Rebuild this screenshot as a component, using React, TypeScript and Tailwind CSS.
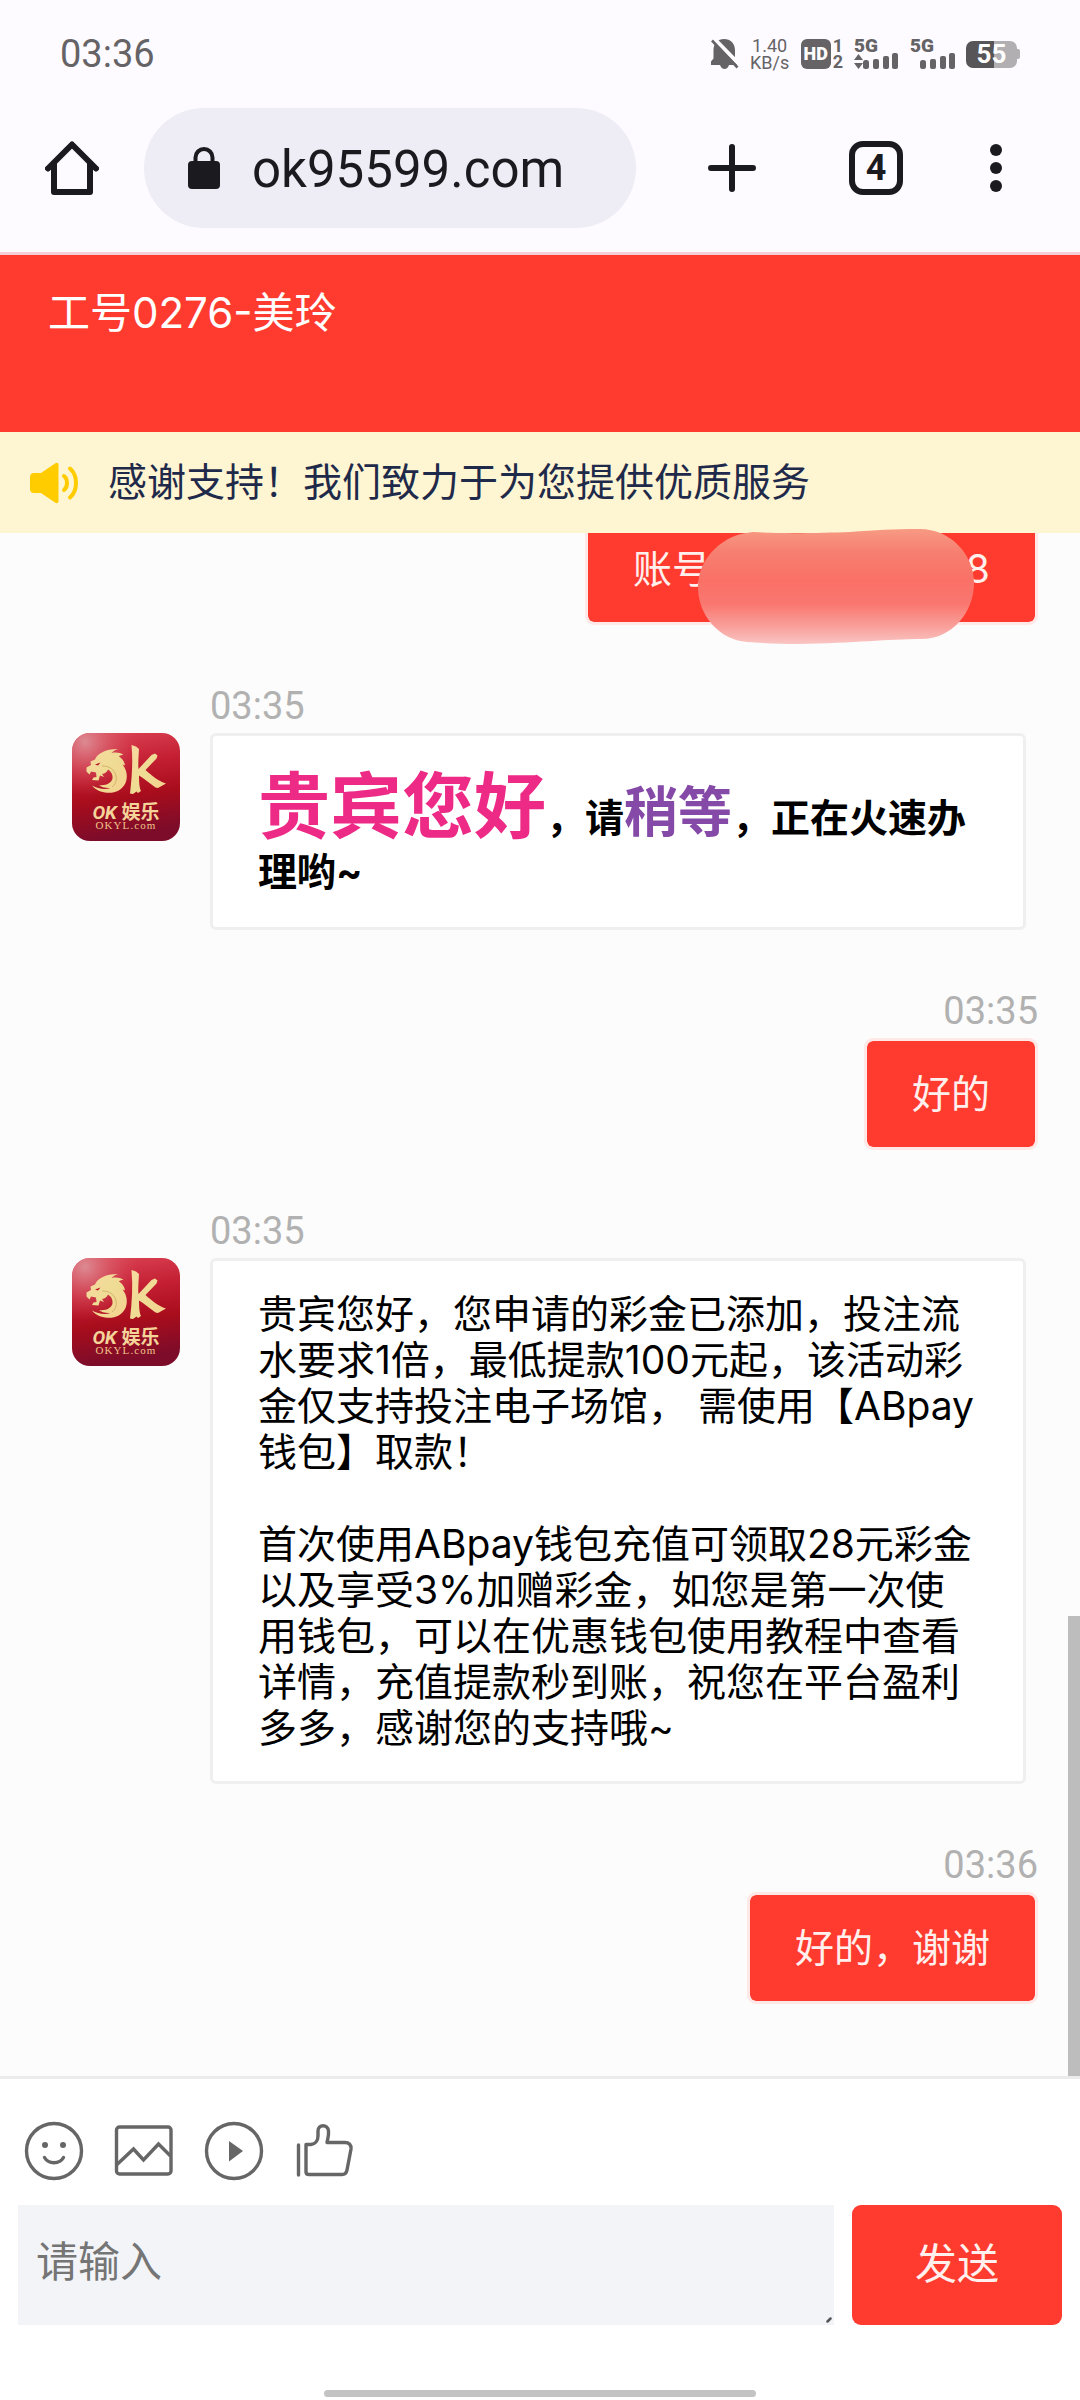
import type { ReactNode } from "react";

// ============================
// Status bar
// ============================
function SignalBars() {
  return (
    <svg width="36" height="16" viewBox="0 0 36 16" fill="currentColor">
      <rect x="0" y="7" width="6" height="9" rx="2.5" />
      <rect x="10" y="6" width="6" height="10" rx="2" />
      <rect x="20" y="3" width="6" height="13" rx="2" />
      <rect x="29" y="0" width="6" height="16" rx="2" />
    </svg>
  );
}

function StatusBar() {
  return (
    <div className="flex h-[108px] items-center justify-between px-[60px] text-[#656366]">
      <span className="text-[38px] leading-[46px]">03:36</span>
      <div className="flex items-center">
        {/* muted bell */}
        <svg width="28" height="32" viewBox="0 0 28 32">
          <path
            d="M13 1C19.500 1 24 5.500 24 12v9l3 4v2H18c-.8 2.500-2.500 4-4.500 4S10 29.500 9 27H0v-3.500l2.500-3V12C2.500 5.500 7 1 13 1z"
            fill="currentColor"
          />
          <path d="M2 -0.500L29 27" stroke="#fdfbff" strokeWidth="4" />
          <path d="M0 0L0 10L6 4z" fill="#fdfbff" />
          <path d="M1 2.500L26.500 29.500" stroke="currentColor" strokeWidth="2.600" />
        </svg>
        <div className="ml-3 flex w-[38px] flex-col items-center text-[18px] leading-[17px]">
          <span>1.40</span>
          <span>KB/s</span>
        </div>
        <div className="ml-3 flex h-[30px] w-[30px] items-center justify-center rounded-[6px] bg-[#656366] text-[18px] leading-[18px] font-black text-white">
          HD
        </div>
        <div className="ml-[2px] flex flex-col text-[18px] leading-[16px] font-bold">
          <span>1</span>
          <span>2</span>
        </div>
        <div className="ml-[11px] flex w-[45px] flex-col">
          <span className="h-[14px] text-[19px] leading-[14px] font-black">5G</span>
          <div className="flex items-end">
            <svg width="9" height="15" viewBox="0 0 9 15" fill="currentColor">
              <path d="M0 6L4.500 0L9 6zM0 9h9L4.500 15z" />
            </svg>
            <SignalBars />
          </div>
        </div>
        <div className="ml-[11px] flex w-[46px] flex-col">
          <span className="h-[14px] text-[19px] leading-[14px] font-black">5G</span>
          <div className="flex justify-end">
            <SignalBars />
          </div>
        </div>
        <div className="ml-[10px] flex items-center">
          <div className="flex h-[27px] w-[51px] items-center justify-center rounded-[7px] bg-linear-to-r from-[#575557] from-55% to-[#b1afb2] to-55% text-[26px] leading-[27px] font-bold text-white">
            55
          </div>
          <div className="h-[10px] w-[3px] rounded-r-[2px] bg-[#b1afb2]" />
        </div>
      </div>
    </div>
  );
}

// ============================
// Browser toolbar
// ============================
function BrowserBar() {
  return (
    <div className="flex items-center pr-[72px] pb-6 pl-[45px] text-[#1b1a1f]">
      <button type="button" aria-label="主页">
        <svg width="54" height="54" viewBox="0 0 54 54" fill="none" stroke="currentColor" strokeWidth="6" strokeLinecap="round" strokeLinejoin="round">
          <path d="M3 27.500L27 3.500L51 27.500" />
          <path d="M9 23v28h36V23" />
        </svg>
      </button>
      <div className="ml-[45px] flex h-[120px] min-w-0 flex-1 items-center rounded-full bg-[#eeedf6] pl-11">
        <svg width="32" height="43" viewBox="0 0 32 43" className="shrink-0">
          <rect x="0" y="14" width="32" height="28" rx="4" fill="currentColor" />
          <path d="M7.500 16V10.500a8.500 8.500 0 0 1 17 0V16" fill="none" stroke="currentColor" strokeWidth="4" />
        </svg>
        <input
          type="text"
          aria-label="网址"
          defaultValue="ok95599.com"
          className="ml-8 w-full min-w-0 bg-transparent pt-1 text-[51px] leading-[60px] outline-none"
        />
      </div>
      <div className="ml-[72px] flex shrink-0 items-center">
        <button type="button" aria-label="新标签页">
          <svg width="48" height="48" viewBox="0 0 48 48" stroke="currentColor" strokeWidth="6" strokeLinecap="round">
            <path d="M24 3v42M3 24h42" />
          </svg>
        </button>
        <button
          type="button"
          aria-label="标签页"
          className="ml-[93px] flex h-[54px] w-[54px] items-center justify-center rounded-[14px] border-[6px] border-[#1b1a1f] text-[36px] leading-[42px] font-bold"
        >
          4
        </button>
        <button type="button" aria-label="更多" className="ml-[81px]">
          <svg width="24" height="48" viewBox="0 0 24 48" fill="currentColor">
            <circle cx="12" cy="6" r="6" />
            <circle cx="12" cy="24" r="6" />
            <circle cx="12" cy="42" r="6" />
          </svg>
        </button>
      </div>
    </div>
  );
}

// ============================
// Chat
// ============================
function Avatar() {
  return (
    <svg width="108" height="108" viewBox="0 0 108 108" className="shrink-0">
      <defs>
        <linearGradient id="avatarRed" x1="0" y1="0" x2="0.15" y2="1">
          <stop offset="0" stopColor="#dc4656" />
          <stop offset="0.35" stopColor="#c41f33" />
          <stop offset="0.65" stopColor="#a80d1c" />
          <stop offset="1" stopColor="#7c0c2a" />
        </linearGradient>
        <radialGradient id="avatarGlow" cx="0.12" cy="0.08" r="0.5">
          <stop offset="0" stopColor="#dc8a92" />
          <stop offset="1" stopColor="#dc4656" stopOpacity="0" />
        </radialGradient>
        <linearGradient id="avatarGold" x1="0" y1="0" x2="1" y2="1">
          <stop offset="0" stopColor="#f7d9a0" />
          <stop offset="0.5" stopColor="#efdc94" />
          <stop offset="1" stopColor="#f5d190" />
        </linearGradient>
      </defs>
      <rect width="108" height="108" rx="18" fill="url(#avatarRed)" />
      <rect width="108" height="108" rx="18" fill="url(#avatarGlow)" />
      {/* dragon curled into an O */}
      <path
        d="M14.500 34.500L19 32L18.500 28.500L23 26.500C25 21 33 16 46 16C42 17.500 40 19 39.500 20C44 19 48 19.500 51.500 22C49 22 47.500 22.500 47 23.500C51 26 52.500 29 53 32.500L50.500 31.500C55 37 56 44 53.500 50C50 58 41 61 33 59.500C27 58.500 22 55.500 20 52.500C26 56 33 57 38.500 55C34 55.500 29 54 27 52C33 53 40 50.500 40.500 45C41 41 38.500 38 36 36.500C35 39 33 40.500 30 41L32 44L28 42.500L26.500 47.500L20 47L21.500 44.500L24.500 44L24 39.500L19 38.500L17.500 41.500L14.500 38.500z"
        fill="url(#avatarGold)"
      />
      <path d="M23 31.500L28.500 29.500L26 32.500z" fill="#b81528" />
      <path d="M30 33C37 32.500 43 37 44 43C45 48 43 52 40 54" fill="none" stroke="#c9a763" strokeWidth="0.8" />
      {/* brush stroke K */}
      <path
        d="M59.500 12L64 13.500L67 16C66.500 24 66 32 66.500 36L79.500 22L83 20.500L85.500 22.500L84.500 25.500L73.500 37C79 42 86 48 94 50.500L86 55L83.500 54.500C77 50 71.500 45 67 42.500C67 49 67.500 55 69 58L66 60L64.500 58.500L61 61L58 60.500C60 44 61 28 59.500 12z"
        fill="url(#avatarGold)"
      />
      <text x="54" y="86" textAnchor="middle" fill="#f5d49a" className="text-[19px] font-bold">
        <tspan fontStyle="italic">OK</tspan> 娱乐
      </text>
      <text x="54" y="96" textAnchor="middle" fill="#f0c48c" className="font-['Liberation_Serif',serif] text-[11px] tracking-widest">
        OKYL.com
      </text>
    </svg>
  );
}

const chatFont = "font-[Inter,'Noto_Sans_CJK_SC',sans-serif]";

function Incoming({ time, children }: { time: string; children: ReactNode }) {
  return (
    <div className="flex items-start pr-[54px] pl-[72px]">
      <div className="mt-[50px] flex">
        <Avatar />
      </div>
      <div className="ml-[30px] min-w-0 flex-1">
        <time className="block h-[50px] text-[38px] leading-[46px] text-[#b1b1b1]">{time}</time>
        <div className={`rounded-[6px] border-[3px] border-[#efefef] bg-white py-[30px] pr-[48px] pl-[45px] text-[39px] leading-[46px] text-black ${chatFont}`}>
          {children}
        </div>
      </div>
    </div>
  );
}

function Outgoing({ time, children }: { time?: string; children: ReactNode }) {
  return (
    <div className="flex flex-col items-end pr-[42px]">
      {time && (
        <time className="block h-[50px] text-[38px] leading-[46px] text-[#b1b1b1]">{time}</time>
      )}
      <div className={`relative rounded-[9px] border-[3px] border-[#ffe8e6] bg-[#ff3b30] bg-clip-padding px-[45px] py-[30px] text-[39px] leading-[46px] text-[#fff0ee] ${chatFont}`}>
        {children}
      </div>
    </div>
  );
}

function Smear() {
  return (
    <svg width="278" height="118" viewBox="0 0 278 118" className="absolute top-[12px] left-[109px] z-20">
      <defs>
        <linearGradient id="smear" x1="0" y1="0" x2="0" y2="1">
          <stop offset="0" stopColor="#f79a84" />
          <stop offset="0.2" stopColor="#f67f70" />
          <stop offset="0.45" stopColor="#fa7067" />
          <stop offset="0.65" stopColor="#f9776f" />
          <stop offset="0.85" stopColor="#f9a09b" />
          <stop offset="1" stopColor="#f9c5c3" />
        </linearGradient>
      </defs>
      <path
        d="M56 4C85 6 125 5 153 4C180 2 195 1 223 1C253 1 277 26 277 55C277 85 254 111 225 111C190 111 160 115 101 116C85 116 65 115 50 114C22 112 1 87 1 59C1 30 26 6 56 4z"
        fill="url(#smear)"
      />
    </svg>
  );
}

// ============================
// Composer
// ============================
function Composer() {
  return (
    <form className="border-t-[3px] border-[#ebebeb] bg-white" onSubmit={(e) => e.preventDefault()}>
      <div className="flex h-[126px] items-center gap-[30px] px-6 pt-[18px] text-[#666]">
        <button type="button" aria-label="表情">
          <svg width="60" height="60" viewBox="0 0 60 60" fill="none" stroke="currentColor" strokeWidth="3.400">
            <circle cx="30" cy="30" r="27.500" />
            <circle cx="21" cy="24" r="3" fill="currentColor" stroke="none" />
            <circle cx="39" cy="24" r="3" fill="currentColor" stroke="none" />
            <path d="M20.500 36.500c4 7 15 7 19 0" strokeLinecap="round" />
          </svg>
        </button>
        <button type="button" aria-label="图片">
          <svg width="60" height="60" viewBox="0 0 60 60" fill="none" stroke="currentColor" strokeWidth="3.400">
            <rect x="2.500" y="6" width="54.500" height="47" rx="3" />
            <path d="M3 43.500L19.500 28L29.500 39L44.500 23L56.500 35" />
          </svg>
        </button>
        <button type="button" aria-label="视频">
          <svg width="60" height="60" viewBox="0 0 60 60" fill="none" stroke="currentColor" strokeWidth="3.400">
            <circle cx="30" cy="30" r="27.500" />
            <path d="M25 20v20.500L39 30z" fill="currentColor" stroke="none" />
          </svg>
        </button>
        <button type="button" aria-label="点赞">
          <svg width="60" height="60" viewBox="0 0 60 60" fill="none" stroke="currentColor" strokeWidth="3.400" strokeLinecap="round" strokeLinejoin="round">
            <path d="M4.500 24v30" />
            <path d="M12 23.500H17C21 23 24 20 24 15V10C24 3 34 3 34.500 10C35 15 33.500 18 33 21.500H51C55 21.500 57.500 24 57 28L53 49C52.500 52 51 53.500 48 53.500H15C13 53.500 12 52.500 12 51V23.500z" />
          </svg>
        </button>
      </div>
      <div className="flex items-stretch gap-[18px] px-[18px] pb-[65px]">
        <div className="relative flex min-w-0 flex-1">
          <textarea
            aria-label="请输入"
            placeholder="请输入"
            className="h-[120px] w-full resize-none bg-[#f2f4f8] px-[18px] py-8 text-[42px] leading-[52px] outline-none placeholder:text-[#757575]"
          />
          <svg width="6" height="6" viewBox="0 0 6 6" className="absolute right-[2px] bottom-[2px]">
            <path d="M1.500 4.500L4.500 1.500" stroke="#555" strokeWidth="2.500" strokeLinecap="round" />
          </svg>
        </div>
        <button type="submit" className="w-[210px] rounded-[9px] bg-[#ff3b30] text-[42px] leading-[52px] text-[#fff0ee]">
          发送
        </button>
      </div>
      <div className="mx-auto mb-[3px] h-[7px] w-2/5 rounded-full bg-[#c3c3c3]" />
    </form>
  );
}

export default function App() {
  return (
    <div className="flex min-h-screen flex-col bg-[#fdfbff] font-[Roboto,'Noto_Sans_CJK_SC',sans-serif]">
      <StatusBar />
      <BrowserBar />

      {/* Agent header */}
      <header className={`h-[180px] border-t-[3px] border-[#f6cfd6] bg-[#ff3b30] px-12 pt-8 text-white ${chatFont}`}>
        <h1 className="text-[42px] leading-[52px] font-normal">工号0276-美玲</h1>
      </header>

      {/* Notice */}
      <div className="relative z-10 flex h-[101px] items-center bg-[#fef5d2] px-[30px] text-[39px] leading-[46px] text-[#1f2a4a]">
        <svg width="50" height="42" viewBox="0 0 50 42" className="shrink-0">
          <path d="M25 1.500C27 0 28.500 1 28.500 3v36c0 2-1.500 3-3.500 1.500L11 31H4C1.500 31 0 29.500 0 27V15c0-2.500 1.500-4 4-4h7z" fill="#ffcc00" />
          <path d="M34 14c4 3 4 11 0 14M40 6.500c8 7 8 22 0 29" fill="none" stroke="#ffcc00" strokeWidth="4" strokeLinecap="round" />
        </svg>
        <p className="ml-7">感谢支持！我们致力于为您提供优质服务</p>
      </div>

      {/* Messages */}
      <main className="relative flex-1 bg-[#fcfcfc] pb-[71px]">
        <div className="-mt-5 flex flex-col gap-[58px]">
          <Outgoing>
            <div className="flex w-[357px] justify-between">
              <span>账号</span>
              <span>8</span>
            </div>
            <Smear />
          </Outgoing>
          <Incoming time="03:35">
            <p className="leading-[51px] font-bold">
              <span className="text-[72px] leading-[80px] text-[#ed2a86]">贵宾您好</span>，请
              <span className="text-[54px] leading-[64px] text-[#8549a8]">稍等</span>，正在火速办理哟~
            </p>
          </Incoming>
          <Outgoing time="03:35">好的</Outgoing>
          <Incoming time="03:35">
            <p>
              贵宾您好，您申请的彩金已添加，投注流水要求1倍，最低提款100元起，该活动彩金仅支持投注电子场馆， 需使用【ABpay钱包】取款！
            </p>
            <p className="mt-[46px]">
              首次使用ABpay钱包充值可领取28元彩金以及享受3%加赠彩金，如您是第一次使用钱包，可以在优惠钱包使用教程中查看详情，充值提款秒到账，祝您在平台盈利多多，感谢您的支持哦~
            </p>
          </Incoming>
          <Outgoing time="03:36">好的，谢谢</Outgoing>
        </div>
        <div className="absolute right-0 bottom-0 h-[460px] w-3 bg-[#bdbdbd]" />
      </main>

      <Composer />
    </div>
  );
}
